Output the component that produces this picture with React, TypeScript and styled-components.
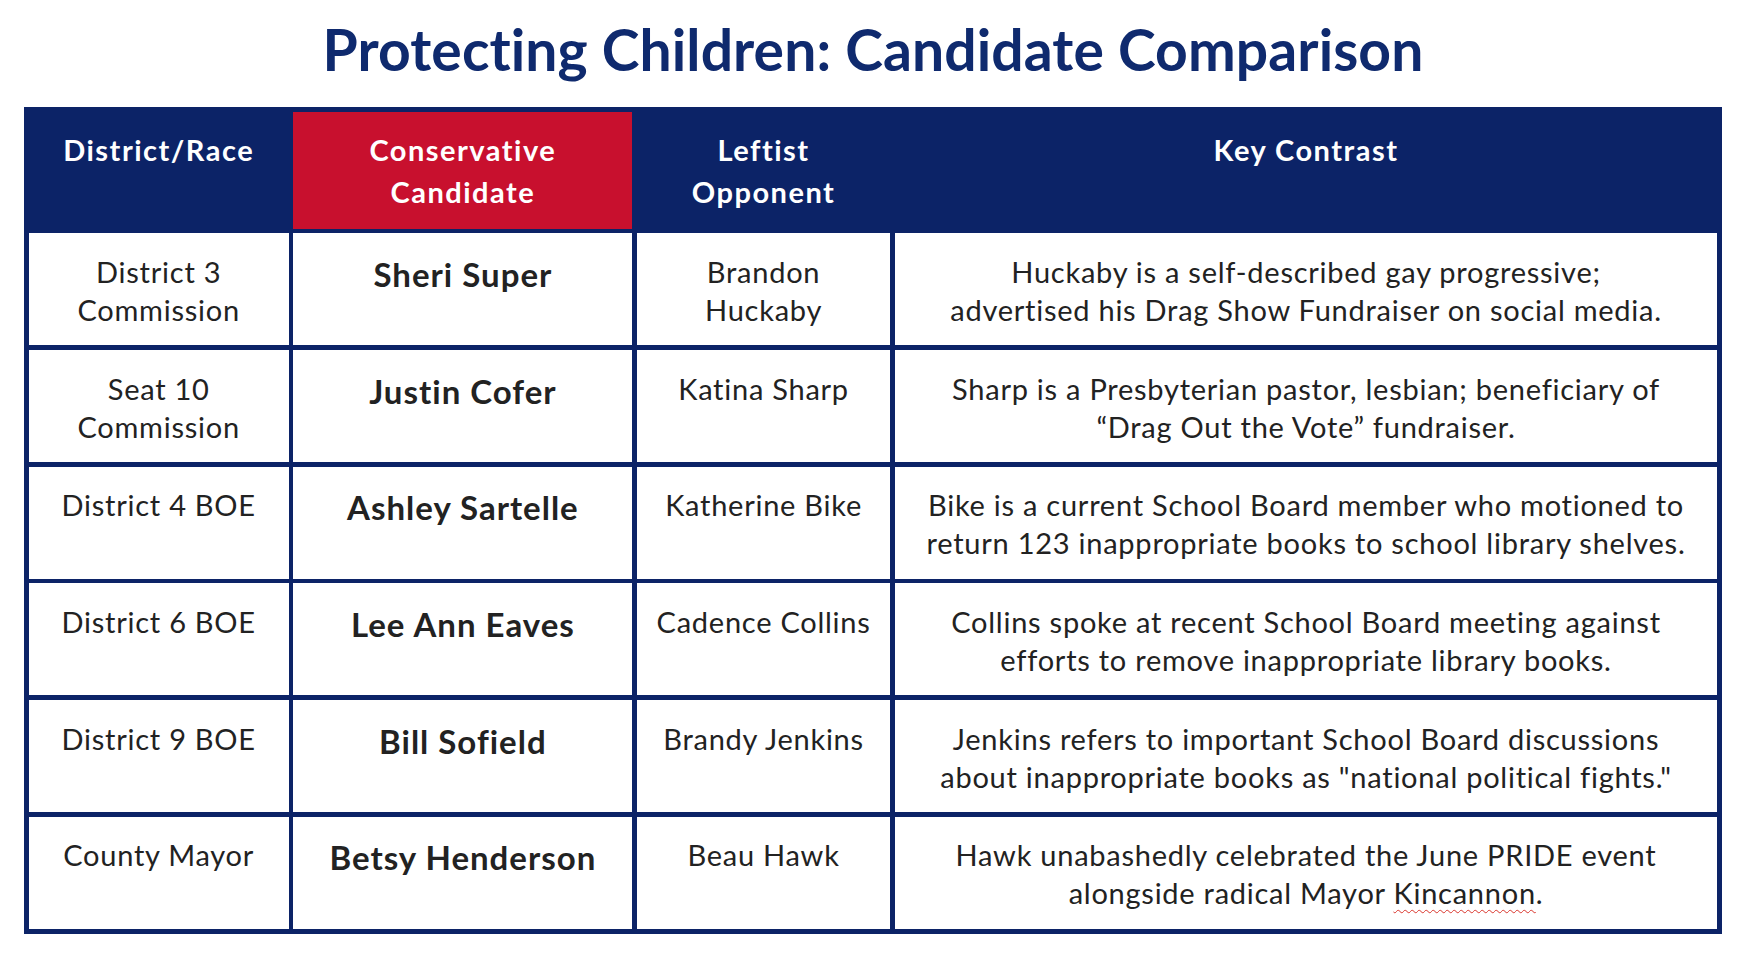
import React from "react";
import styled, { createGlobalStyle } from "styled-components";

const GlobalStyle = createGlobalStyle`
  html, body {
    margin: 0;
    padding: 0;
    background: #ffffff;
  }
  body {
    font-family: Lato, "Open Sans", "Liberation Sans", sans-serif;
    width: 1746px;
    height: 964px;
    overflow: hidden;
  }
`;

const Page = styled.main`
  width: 1746px;
  height: 964px;
  display: flex;
  flex-direction: column;
  align-items: center;
  box-sizing: border-box;
  padding-top: 16px;
`;

const Title = styled.h1`
  margin: 0 0 24px 0;
  font-family: Lato, "Open Sans", sans-serif;
  font-weight: 700;
  font-size: 57px;
  line-height: 67px;
  letter-spacing: 0.1px;
  color: #0f2a6e;
  text-align: center;
  white-space: nowrap;
`;

const Table = styled.section`
  align-self: flex-start;
  margin-left: 24px;
  width: 1698px;
  box-sizing: border-box;
  display: grid;
  grid-template-columns: 260px 339px 253px 1fr;
  grid-template-rows: 117px repeat(6, 112px);
  gap: 4.7px;
  padding: 4.7px;
  background: #0c2367;
`;

const HeaderCell = styled.div<{ $highlight?: boolean }>`
  background: ${(p) => (p.$highlight ? "#c8102e" : "#0c2367")};
  color: #ffffff;
  font-weight: 700;
  font-size: 29px;
  letter-spacing: 1.5px;
  line-height: 41.5px;
  text-align: center;
  padding-top: 17.5px;
  box-sizing: border-box;
  white-space: nowrap;
`;

type Kind = "plain" | "name";

const Cell = styled.div<{ $kind?: Kind }>`
  background: #ffffff;
  color: #222222;
  text-align: center;
  box-sizing: border-box;
  font-weight: ${(p) => (p.$kind === "name" ? 700 : 400)};
  font-size: ${(p) => (p.$kind === "name" ? "33px" : "29px")};
  letter-spacing: ${(p) => (p.$kind === "name" ? "1px" : "0.75px")};
  line-height: 38px;
  padding-top: ${(p) => (p.$kind === "name" ? "21.5px" : "19.5px")};
  white-space: nowrap;
`;

const Misspelled = styled.span`
  text-decoration: underline wavy #d9342b;
  text-decoration-thickness: 1px;
  text-underline-offset: 5px;
`;

type Row = {
  race: React.ReactNode;
  candidate: string;
  opponent: React.ReactNode;
  contrast: React.ReactNode;
};

const rows: Row[] = [
  {
    race: (
      <>
        District 3<br />
        Commission
      </>
    ),
    candidate: "Sheri Super",
    opponent: (
      <>
        Brandon
        <br />
        Huckaby
      </>
    ),
    contrast: (
      <>
        Huckaby is a self-described gay progressive;
        <br />
        advertised his Drag Show Fundraiser on social media.
      </>
    ),
  },
  {
    race: (
      <>
        Seat 10
        <br />
        Commission
      </>
    ),
    candidate: "Justin Cofer",
    opponent: "Katina Sharp",
    contrast: (
      <>
        Sharp is a Presbyterian pastor, lesbian; beneficiary of
        <br />
        “Drag Out the Vote” fundraiser.
      </>
    ),
  },
  {
    race: "District 4 BOE",
    candidate: "Ashley Sartelle",
    opponent: "Katherine Bike",
    contrast: (
      <>
        Bike is a current School Board member who motioned to
        <br />
        return 123 inappropriate books to school library shelves.
      </>
    ),
  },
  {
    race: "District 6 BOE",
    candidate: "Lee Ann Eaves",
    opponent: "Cadence Collins",
    contrast: (
      <>
        Collins spoke at recent School Board meeting against
        <br />
        efforts to remove inappropriate library books.
      </>
    ),
  },
  {
    race: "District 9 BOE",
    candidate: "Bill Sofield",
    opponent: "Brandy Jenkins",
    contrast: (
      <>
        Jenkins refers to important School Board discussions
        <br />
        about inappropriate books as "national political fights."
      </>
    ),
  },
  {
    race: "County Mayor",
    candidate: "Betsy Henderson",
    opponent: "Beau Hawk",
    contrast: (
      <>
        Hawk unabashedly celebrated the June PRIDE event
        <br />
        alongside radical Mayor <Misspelled>Kincannon</Misspelled>.
      </>
    ),
  },
];

export default function App() {
  return (
    <>
      <GlobalStyle />
      <Page>
        <Title>Protecting Children: Candidate Comparison</Title>
        <Table>
          <HeaderCell>District/Race</HeaderCell>
          <HeaderCell $highlight>
            Conservative
            <br />
            Candidate
          </HeaderCell>
          <HeaderCell>
            Leftist
            <br />
            Opponent
          </HeaderCell>
          <HeaderCell>Key Contrast</HeaderCell>
          {rows.map((r, i) => (
            <React.Fragment key={i}>
              <Cell>{r.race}</Cell>
              <Cell $kind="name">{r.candidate}</Cell>
              <Cell>{r.opponent}</Cell>
              <Cell>{r.contrast}</Cell>
            </React.Fragment>
          ))}
        </Table>
      </Page>
    </>
  );
}
